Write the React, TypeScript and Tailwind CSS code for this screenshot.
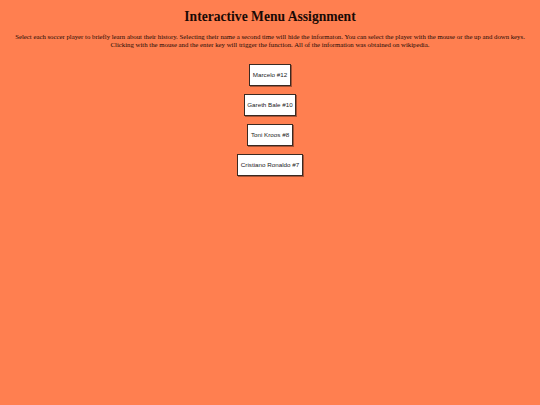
import React from 'react';

const players = ['Marcelo #12', 'Gareth Bale #10', 'Toni Kroos #8', 'Cristiano Ronaldo #7'];

export default function App() {
    return (
        <div className="min-h-[405px] bg-[#ff7f50] text-[#1a0a05] pt-[8px]" style={{ fontFamily: '"Liberation Serif", serif' }}>
            <h1 className="text-center font-bold text-[13.6px] leading-[18px]">Interactive Menu Assignment</h1>
            <p className="mt-[7px] text-center text-[6.77px] leading-[7.5px] px-[8px]">
                Select each soccer player to briefly learn about their history. Selecting their name a second time will hide the informaton. You can select the player with the mouse or the up and down keys.
                <br />
                Clicking with the mouse and the enter key will trigger the function. All of the information was obtained on wikipedia.
            </p>
            <div className="mt-[16px] flex flex-col items-center gap-[8px]">
                {players.map(p => (
                    <button
                        key={p}
                        className="h-[22px] px-[2.5px] bg-white border border-[#3a2a22] shadow-[1px_1px_0_rgba(0,0,0,0.35)] text-[6.25px] text-[#222]"
                        style={{ fontFamily: '"Liberation Sans", Arial, sans-serif' }}
                    >
                        {p}
                    </button>
                ))}
            </div>
        </div>
    );
}
